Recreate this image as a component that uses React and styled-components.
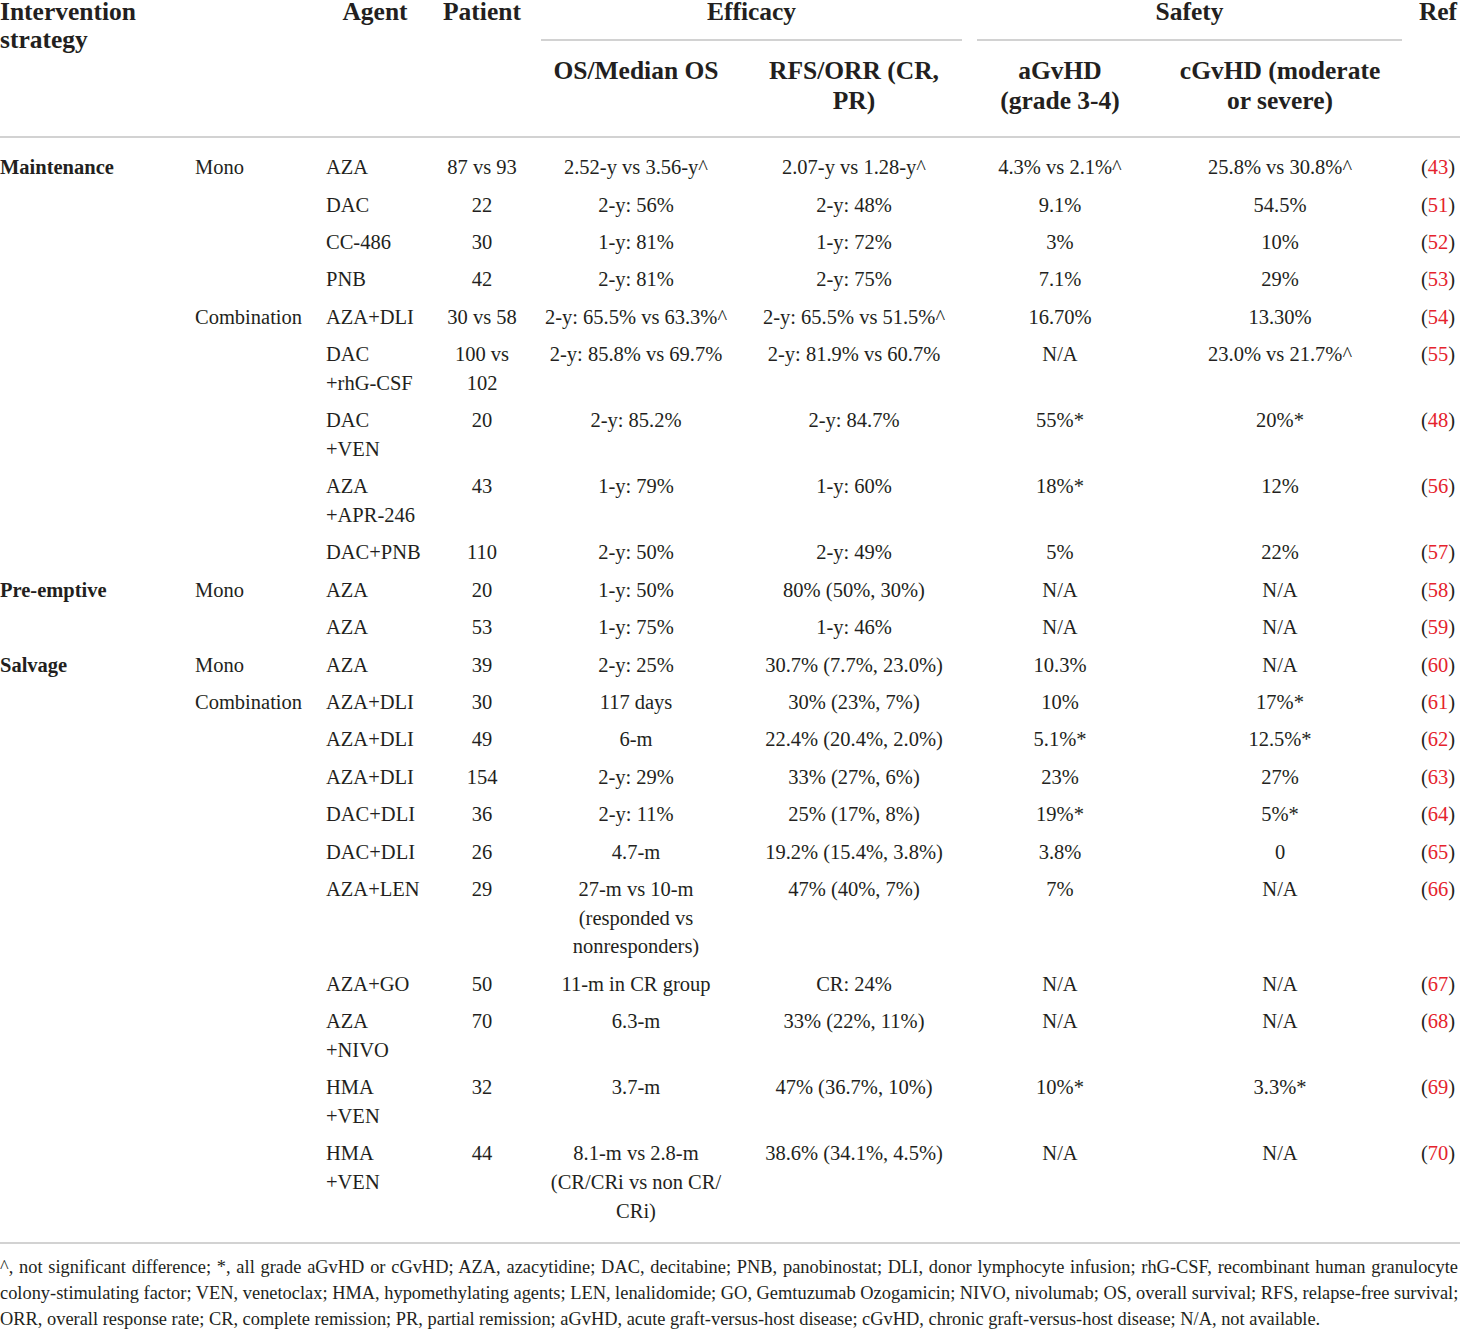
import React from 'react';
import styled, { createGlobalStyle } from 'styled-components';

const GlobalStyle = createGlobalStyle`
  html, body {
    margin: 0;
    padding: 0;
    background: #ffffff;
    overflow: hidden;
  }
  body {
    font-family: 'Liberation Serif', 'Times New Roman', serif;
    color: #231f20;
  }
`;

const Page = styled.div`
  width: 1460px;
  overflow: hidden;
`;

const Table = styled.table`
  width: 1472px;
  margin: -2px 0 0 -6px;
  border-collapse: collapse;
  table-layout: fixed;
  font-family: 'Liberation Serif', 'Times New Roman', serif;
  color: #231f20;
`;

const Head = styled.thead`
  border-bottom: 2px solid #d2d2d2;
`;

const HeadCell = styled.th`
  font-size: 25.5px;
  font-weight: 700;
  line-height: 28px;
  padding: 0 6px;
  vertical-align: top;
  text-align: ${(p) => p.$align || 'center'};
  white-space: pre-line;
`;

const GroupCell = styled.th`
  font-size: 25.5px;
  font-weight: 700;
  line-height: 28px;
  padding: 0 8px 0 7px;
  vertical-align: top;
  text-align: center;
`;

const GroupRule = styled.div`
  margin-top: 13px;
  border-top: 2px solid #d2d2d2;
`;

const SubHeadCell = styled.th`
  font-size: 25.5px;
  font-weight: 700;
  line-height: 30px;
  padding: 15px 6px 20px;
  vertical-align: top;
  text-align: center;
  white-space: pre-line;
`;

const Body = styled.tbody`
  border-bottom: 2px solid #d2d2d2;
`;

const Row = styled.tr`
  &:first-child > td {
    padding-top: 15.2px;
  }
  &:last-child > td {
    padding-bottom: 17px;
  }
`;

const Cell = styled.td`
  font-size: 20.5px;
  line-height: 28.7px;
  padding: 4.35px 6px;
  vertical-align: top;
  white-space: pre-line;
  text-align: ${(p) => (p.$left ? 'left' : 'center')};
  font-weight: ${(p) => (p.$bold ? 700 : 400)};
`;

const RefNum = styled.span`
  color: #e5232d;
`;

const Notes = styled.div`
  margin-top: 10px;
  width: 1458px;
  font-family: 'Liberation Serif', 'Times New Roman', serif;
  font-size: 18.4px;
  line-height: 26px;
  color: #231f20;
`;

const NoteLine = styled.div`
  white-space: nowrap;
  text-align: ${(p) => (p.$last ? 'left' : 'justify')};
  text-align-last: ${(p) => (p.$last ? 'left' : 'justify')};
`;

const widths = [195, 131, 110, 104, 204, 232, 180, 260, 56];

const rows = [
  ['Maintenance', 'Mono', 'AZA', '87 vs 93', '2.52-y vs 3.56-y^', '2.07-y vs 1.28-y^', '4.3% vs 2.1%^', '25.8% vs 30.8%^', '43'],
  ['', '', 'DAC', '22', '2-y: 56%', '2-y: 48%', '9.1%', '54.5%', '51'],
  ['', '', 'CC-486', '30', '1-y: 81%', '1-y: 72%', '3%', '10%', '52'],
  ['', '', 'PNB', '42', '2-y: 81%', '2-y: 75%', '7.1%', '29%', '53'],
  ['', 'Combination', 'AZA+DLI', '30 vs 58', '2-y: 65.5% vs 63.3%^', '2-y: 65.5% vs 51.5%^', '16.70%', '13.30%', '54'],
  ['', '', 'DAC\n+rhG-CSF', '100 vs\n102', '2-y: 85.8% vs 69.7%', '2-y: 81.9% vs 60.7%', 'N/A', '23.0% vs 21.7%^', '55'],
  ['', '', 'DAC\n+VEN', '20', '2-y: 85.2%', '2-y: 84.7%', '55%*', '20%*', '48'],
  ['', '', 'AZA\n+APR-246', '43', '1-y: 79%', '1-y: 60%', '18%*', '12%', '56'],
  ['', '', 'DAC+PNB', '110', '2-y: 50%', '2-y: 49%', '5%', '22%', '57'],
  ['Pre-emptive', 'Mono', 'AZA', '20', '1-y: 50%', '80% (50%, 30%)', 'N/A', 'N/A', '58'],
  ['', '', 'AZA', '53', '1-y: 75%', '1-y: 46%', 'N/A', 'N/A', '59'],
  ['Salvage', 'Mono', 'AZA', '39', '2-y: 25%', '30.7% (7.7%, 23.0%)', '10.3%', 'N/A', '60'],
  ['', 'Combination', 'AZA+DLI', '30', '117 days', '30% (23%, 7%)', '10%', '17%*', '61'],
  ['', '', 'AZA+DLI', '49', '6-m', '22.4% (20.4%, 2.0%)', '5.1%*', '12.5%*', '62'],
  ['', '', 'AZA+DLI', '154', '2-y: 29%', '33% (27%, 6%)', '23%', '27%', '63'],
  ['', '', 'DAC+DLI', '36', '2-y: 11%', '25% (17%, 8%)', '19%*', '5%*', '64'],
  ['', '', 'DAC+DLI', '26', '4.7-m', '19.2% (15.4%, 3.8%)', '3.8%', '0', '65'],
  ['', '', 'AZA+LEN', '29', '27-m vs 10-m\n(responded vs\nnonresponders)', '47% (40%, 7%)', '7%', 'N/A', '66'],
  ['', '', 'AZA+GO', '50', '11-m in CR group', 'CR: 24%', 'N/A', 'N/A', '67'],
  ['', '', 'AZA\n+NIVO', '70', '6.3-m', '33% (22%, 11%)', 'N/A', 'N/A', '68'],
  ['', '', 'HMA\n+VEN', '32', '3.7-m', '47% (36.7%, 10%)', '10%*', '3.3%*', '69'],
  ['', '', 'HMA\n+VEN', '44', '8.1-m vs 2.8-m\n(CR/CRi vs non CR/\nCRi)', '38.6% (34.1%, 4.5%)', 'N/A', 'N/A', '70'],
];

const notes = [
  '^, not significant difference; *, all grade aGvHD or cGvHD; AZA, azacytidine; DAC, decitabine; PNB, panobinostat; DLI, donor lymphocyte infusion; rhG-CSF, recombinant human granulocyte',
  'colony-stimulating factor; VEN, venetoclax; HMA, hypomethylating agents; LEN, lenalidomide; GO, Gemtuzumab Ozogamicin; NIVO, nivolumab; OS, overall survival; RFS, relapse-free survival;',
  'ORR, overall response rate; CR, complete remission; PR, partial remission; aGvHD, acute graft-versus-host disease; cGvHD, chronic graft-versus-host disease; N/A, not available.',
];

const DataRow = ({ row }) => {
  const [strategy, sub, agent, patient, os, rfs, agvhd, cgvhd, ref] = row;
  return (
    <Row>
      <Cell $left $bold>{strategy}</Cell>
      <Cell $left>{sub}</Cell>
      <Cell $left>{agent}</Cell>
      <Cell>{patient}</Cell>
      <Cell>{os}</Cell>
      <Cell>{rfs}</Cell>
      <Cell>{agvhd}</Cell>
      <Cell>{cgvhd}</Cell>
      <Cell>
        (<RefNum>{ref}</RefNum>)
      </Cell>
    </Row>
  );
};

export default function App() {
  return (
    <Page>
      <GlobalStyle />
      <Table>
        <colgroup>
          {widths.map((w, i) => (
            <col key={i} style={{ width: w }} />
          ))}
        </colgroup>
        <Head>
          <tr>
            <HeadCell rowSpan={2} $align="left">{'Intervention\nstrategy'}</HeadCell>
            <HeadCell rowSpan={2} />
            <HeadCell rowSpan={2}>Agent</HeadCell>
            <HeadCell rowSpan={2}>Patient</HeadCell>
            <GroupCell colSpan={2}>
              Efficacy
              <GroupRule />
            </GroupCell>
            <GroupCell colSpan={2}>
              Safety
              <GroupRule />
            </GroupCell>
            <HeadCell rowSpan={2}>Ref</HeadCell>
          </tr>
          <tr>
            <SubHeadCell>OS/Median OS</SubHeadCell>
            <SubHeadCell>{'RFS/ORR (CR,\nPR)'}</SubHeadCell>
            <SubHeadCell>{'aGvHD\n(grade 3-4)'}</SubHeadCell>
            <SubHeadCell>{'cGvHD (moderate\nor severe)'}</SubHeadCell>
          </tr>
        </Head>
        <Body>
          {rows.map((row, i) => (
            <DataRow key={i} row={row} />
          ))}
        </Body>
      </Table>
      <Notes>
        {notes.map((line, i) => (
          <NoteLine key={i} $last={i === notes.length - 1}>
            {line}
          </NoteLine>
        ))}
      </Notes>
    </Page>
  );
}
